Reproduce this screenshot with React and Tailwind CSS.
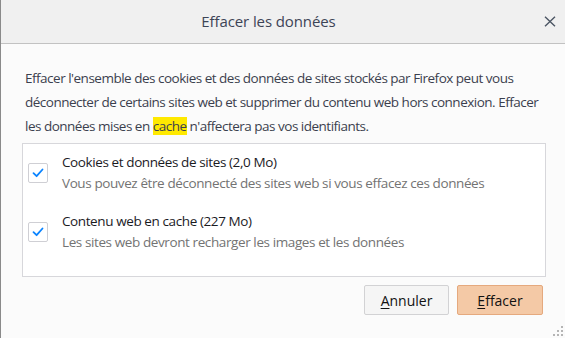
import React from 'react';

const font = { fontFamily: '"Open Sans", "Noto Sans", sans-serif' };

const CheckIcon = () => (
  <svg width="12" height="10" viewBox="0 0 12 10" fill="none">
    <path d="M1.5 5.2 L4.6 8.2 L10.5 1.5" stroke="#0a84ff" strokeWidth="1.8" strokeLinecap="round" strokeLinejoin="round" />
  </svg>
);

const CloseIcon = () => (
  <svg width="12" height="11" viewBox="0 0 12 11" fill="none">
    <path d="M1 0.8 L11 10.2 M11 0.8 L1 10.2" stroke="#4b5563" strokeWidth="1.4" />
  </svg>
);

const Option = ({ label, hint }) => (
  <div className="flex items-center">
    <div className="ml-[5px] w-[20px] h-[20px] flex items-center justify-center bg-white border border-[#cfcfd4] rounded-[2px]">
      <CheckIcon />
    </div>
    <div className="ml-[14px] flex flex-col text-[13.5px] tracking-[-0.4px] leading-[21px]">
      <span className="text-[#1b1b1f]">{label}</span>
      <span className="text-[#737373]">{hint}</span>
    </div>
  </div>
);

export default function App() {
  return (
    <div className="relative w-[565px] h-[338px] bg-[#fbfbfb] border-l border-[#8a8a8a] overflow-hidden" style={font}>
      {/* Header */}
      <div className="flex items-center h-[44px] bg-[#f0f0f0] border-b border-[#c2c2c2]">
        <div className="flex-1 text-center text-[15px] tracking-[-0.1px] text-[#3d4456]">Effacer les données</div>
        <button className="w-[28px] h-[28px] mr-[1px] flex items-center justify-center">
          <CloseIcon />
        </button>
      </div>

      {/* Body */}
      <p className="pt-[22px] pl-[24px] pr-[10px] text-[13.5px] tracking-[-0.5px] leading-[24px] text-[#3b3f4e]">
        Effacer l'ensemble des cookies et des données de sites stockés par Firefox peut vous déconnecter de certains sites web et supprimer du contenu web hors connexion. Effacer les données mises en{' '}
        <span className="bg-[#ffe900]">cache</span> n'affectera pas vos identifiants.
      </p>

      <div className="mt-[5px] ml-[21px] mr-[19px] h-[134px] bg-white border border-[#d7d7db] pt-[8px] flex flex-col gap-[17px]">
        <Option label="Cookies et données de sites (2,0 Mo)" hint="Vous pouvez être déconnecté des sites web si vous effacez ces données" />
        <Option label="Contenu web en cache (227 Mo)" hint="Les sites web devront recharger les images et les données" />
      </div>

      {/* Buttons */}
      <div className="flex justify-end gap-[8px] mt-[8px] mr-[22px]">
        <button className="w-[85px] h-[30px] bg-[#f5f5f5] border border-[#d2d2d4] rounded-[2px] text-[14px] text-[#111]">
          <span className="underline underline-offset-2">A</span>nnuler
        </button>
        <button className="w-[86px] h-[30px] bg-[#f4c9a6] border border-[#e5a97e] rounded-[2px] text-[14px] text-[#111]">
          <span className="underline underline-offset-2">E</span>ffacer
        </button>
      </div>

      {/* Resize grip */}
      <svg className="absolute right-[1px] bottom-[1px]" width="11" height="11" viewBox="0 0 11 11">
        {[[8, 0], [4, 4], [8, 4], [0, 8], [4, 8], [8, 8]].map(([x, y]) => (
          <rect key={`${x}-${y}`} x={x} y={y} width="2" height="2" fill="#b5b5b5" />
        ))}
      </svg>
    </div>
  );
}
